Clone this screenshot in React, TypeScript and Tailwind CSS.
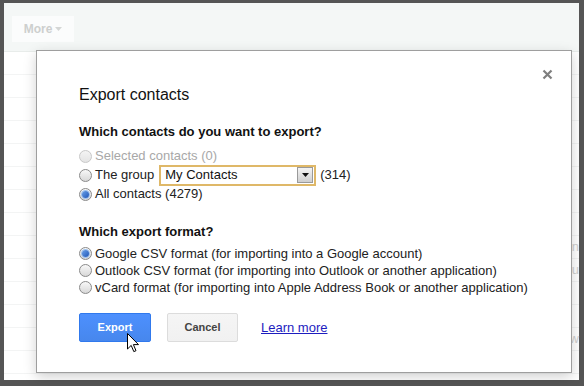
import React from 'react';

const font = { fontFamily: '"Liberation Sans", Arial, sans-serif' };

function Radio({ checked = false, disabled = false }: { checked?: boolean; disabled?: boolean }) {
  return (
    <span
      className={`relative inline-flex h-[13px] w-[13px] shrink-0 items-center justify-center rounded-full border ${
        disabled
          ? 'border-[#c8c8c8] bg-gradient-to-b from-[#f4f4f4] to-[#e4e4e4]'
          : 'border-[#8a8a8a] bg-gradient-to-b from-[#f8f8f8] to-[#d8d8d8]'
      }`}
    >
      {checked && (
        <span className="h-[7px] w-[7px] rounded-full bg-gradient-to-br from-[#6aa0e8] to-[#1f56b8] ring-1 ring-[#9cc0ee]" />
      )}
    </span>
  );
}

function Option({
  children,
  checked,
  disabled,
  h = 'h-[17px]',
}: {
  children: React.ReactNode;
  checked?: boolean;
  disabled?: boolean;
  h?: string;
}) {
  return (
    <div className={`flex items-center ${h} text-[13px] leading-[16px] ${disabled ? 'text-[#a8a8a8]' : 'text-[#222]'}`}>
      <Radio checked={checked} disabled={disabled} />
      <span className="ml-[3px] whitespace-nowrap">{children}</span>
    </div>
  );
}

function GroupSelect() {
  return (
    <div className="ml-[5px] flex h-[21px] w-[157px] items-center border-2 border-[#dfb868] bg-white pl-[4px] pr-[1px]">
      <span className="flex-1 text-[13px] leading-[16px] text-[#111]">My Contacts</span>
      <span className="flex h-[16px] w-[16px] items-center justify-center border border-[#9a9a9a] bg-gradient-to-b from-[#f4f4f4] to-[#cfcfcf]">
        <svg width="7" height="4" viewBox="0 0 7 4">
          <path d="M0 0 L7 0 L3.5 4 Z" fill="#111" />
        </svg>
      </span>
    </div>
  );
}

export default function App() {
  const rows = Array.from({ length: 14 });
  return (
    <div className="relative h-[386px] w-[584px] overflow-hidden bg-[#555555] pb-[6px] pl-[4px] pr-[5px] pt-[3px]" style={font}>
      {/* page behind the dialog */}
      <div className="flex h-full w-full flex-col bg-white">
        <div className="flex h-[49px] shrink-0 items-start border-b border-[#e8ecea] bg-[#f4f7f6] pl-[8px] pt-[13px]">
          <div className="flex h-[26px] w-[62px] items-center justify-center gap-[3px] bg-[#fbfcfc] text-[12px] font-bold text-[#cdcfce]">
            More
            <svg width="7" height="4" viewBox="0 0 7 4">
              <path d="M0 0 L7 0 L3.5 4 Z" fill="#d4d6d5" />
            </svg>
          </div>
        </div>
        {rows.map((_, i) => (
          <div key={i} className="flex h-[23px] shrink-0 items-center justify-end border-b border-[#f3f4f4] text-[13px] text-[#d0d0d0]">
            {i === 8 ? 'an' : i === 9 ? 'su' : i === 12 ? 'w' : ''}
          </div>
        ))}
      </div>

      {/* dialog */}
      <div className="absolute left-[36px] top-[50px] h-[323px] w-[536px] border border-[#9e9e9e] bg-white pl-[42px] pt-[34px] shadow-[0_4px_12px_rgba(0,0,0,0.18)]">
        <button className="absolute right-[18px] top-[17px] flex h-[12px] w-[12px] items-center justify-center">
          <svg width="11" height="11" viewBox="0 0 11 11">
            <path d="M1.5 1.5 L9.5 9.5 M9.5 1.5 L1.5 9.5" stroke="#7e7e7e" strokeWidth="2.2" />
          </svg>
        </button>

        <div className="h-[20px] text-[16px] leading-[20px] text-[#111]">Export contacts</div>

        <div className="mt-[19px] h-[16px] text-[13px] font-bold leading-[16px] text-[#111]">
          Which contacts do you want to export?
        </div>
        <div className="mt-[7px] flex flex-col">
          <Option disabled h="h-[18px]">
            Selected contacts (0)
          </Option>
          <div className="flex h-[20px] items-center text-[13px] leading-[16px] text-[#222]">
            <Radio />
            <span className="ml-[3px] whitespace-nowrap">The group</span>
            <GroupSelect />
            <span className="ml-[4px]">(314)</span>
          </div>
          <Option checked h="h-[18px]">
            All contacts (4279)
          </Option>
        </div>

        <div className="mt-[21px] h-[16px] text-[13px] font-bold leading-[16px] text-[#111]">Which export format?</div>
        <div className="mt-[5px] flex flex-col">
          <Option checked>Google CSV format (for importing into a Google account)</Option>
          <Option>Outlook CSV format (for importing into Outlook or another application)</Option>
          <Option>vCard format (for importing into Apple Address Book or another application)</Option>
        </div>

        <div className="mt-[17px] flex items-center">
          <button className="relative h-[29px] w-[72px] rounded-[2px] border border-[#3079ed] bg-gradient-to-b from-[#4d90fe] to-[#4787ed] text-[11px] font-bold text-white">
            Export
            <svg className="absolute left-[47px] top-[19px]" width="13" height="21" viewBox="0 0 13 21">
              <path d="M0.5 0.5 L0.5 16 L4.2 12.4 L6.8 18.6 L9 17.7 L6.4 11.6 L11.5 11.6 Z" fill="#fff" stroke="#000" strokeWidth="1" />
            </svg>
          </button>
          <button className="ml-[16px] h-[29px] w-[71px] rounded-[2px] border border-[#dcdcdc] bg-gradient-to-b from-[#f5f5f5] to-[#f1f1f1] text-[11px] font-bold text-[#444]">
            Cancel
          </button>
          <a className="ml-[23px] text-[13px] text-[#1d1dbf] underline">Learn more</a>
        </div>
      </div>
    </div>
  );
}
